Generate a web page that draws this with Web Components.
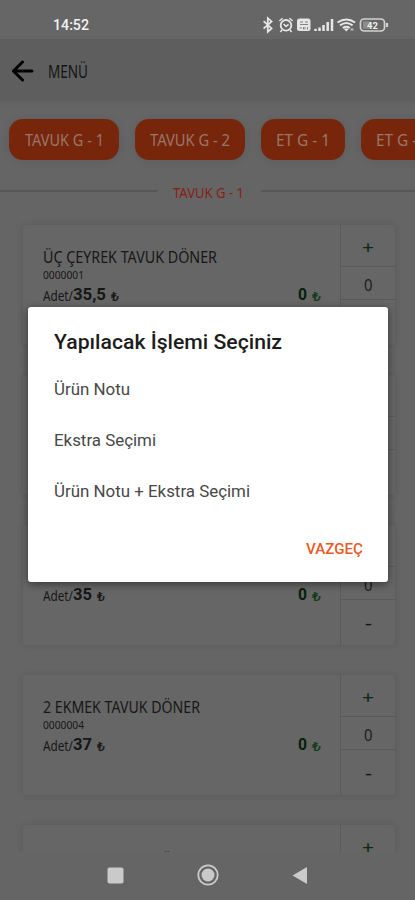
<!DOCTYPE html>
<html lang="tr">
<head>
<meta charset="utf-8">
<meta name="viewport" content="width=device-width">
<title>Menü</title>
<style>html,body{margin:0;background:#656565}body{width:415px;height:900px;overflow:hidden}</style>
</head>
<body>
<menu-screen></menu-screen>
<script>
const define = (name, html, setup) => customElements.define(name, class extends HTMLElement {
  connectedCallback() {
    if (this.shadowRoot) return;
    this.attachShadow({mode: 'open'}).innerHTML = html;
    if (setup) setup(this, this.shadowRoot);
  }
});

// A single line of text, condensed or widened to the width in its "w" attribute.
define('fit-text', `<style>
:host{display:block;white-space:nowrap;font-family:"Noto Sans","Open Sans",sans-serif;line-height:1;flex:none}
span{display:inline-block;transform-origin:0 50%;vertical-align:top}
</style><span><slot></slot></span>`, (el, root) => {
  const w = +el.getAttribute('w'), s = root.querySelector('span');
  el.style.width = w + 'px';
  s.style.transform = `scaleX(${w / s.getBoundingClientRect().width})`;
});

define('status-bar', `<style>
:host{display:flex;align-items:center;height:39px;box-sizing:border-box;padding:11px 26px 0 53px;color:#f2f2f2;background:#666}
fit-text{font:500 14.5px/1 Roboto,sans-serif;margin:2px auto 0 0}
svg{display:block;flex:none}
</style>
<fit-text w="36">14:52</fit-text>
<svg width="127" height="18" viewBox="0 0 127 18" fill="none" stroke="#e6e6e6" stroke-width="1.5">
<path d="M1.6 5.2 9.6 12.4 5.8 15.8V2.1L9.6 5.4 1.6 12.6" stroke-width="1.8"/>
<circle cx="24" cy="9.3" r="5.3" stroke-width="1.8"/><path d="m17.4 5 3.2-2.8M30.6 5l-3.2-2.8M20 14l-1.6 2M28 14l1.6 2M21.6 8l2.4 2.4 2.6-2"/>
<rect x="35" y="2.5" width="13.5" height="12.500" rx="2.5" fill="#e6e6e6" stroke="none"/>
<path d="M38 6h3m2 0h3M38 8.500h8M37.500 12h2.500m1.500-1v2.500m1.500-2.500v2.500m2.500-2.500v2.500" stroke="#858585" stroke-width="1"/>
<path d="M53.500 12.800v2.200M57.500 11.500v3.500M61.500 9v6M65.700 6v9M70 3v12" stroke-width="2.500"/>
<path d="M75.500 6.500q8.800-6.200 17.600 0M78 9.400q6.300-4.600 12.600 0M80.800 12q3.500-2.500 7 0" stroke-width="2"/>
<path d="m81.500 12.500 2.800 3 2.800-3z" fill="#e6e6e6" stroke="none"/><path d="M88.500 13.500h3" stroke="#bbb" stroke-width="2"/>
<rect x="98.500" y="3" width="24" height="12" rx="3.600" stroke="#d2d2d2" stroke-width="1.700"/><path d="M125 7v4" stroke="#d2d2d2" stroke-width="2.200"/>
<rect x="101" y="5.300" width="7" height="7.500" fill="#8c8c8c" stroke="none"/>
<text x="105" y="12.500" font-family="Roboto,sans-serif" font-weight="700" font-size="9.500" fill="#eee" stroke="none">42</text>
</svg>`);

define('app-header', `<style>
:host{display:flex;align-items:center;height:62px;padding:2px 0 0 11px;box-sizing:border-box;background:#5e5e5e;color:#141414;box-shadow:0 2px 7px #0000000d}
svg{margin-right:14px}fit-text{font-size:18px;margin-top:-1px}
</style>
<svg width="23" height="22" viewBox="0 0 23 22" fill="none" stroke="#000" stroke-width="3" stroke-linecap="round" stroke-linejoin="round"><path d="M21 11H2.500M11.500 2 2.500 11l9 9"/></svg>
<fit-text w="40"><slot></slot></fit-text>`);

define('category-chip', `<style>
:host{display:flex;flex:none;align-items:center;justify-content:center;height:41px;border-radius:14px;background:#78260b;color:#98776a;box-shadow:0 1px 9px #00000018}
fit-text{font-size:17px}
</style><fit-text><slot></slot></fit-text>`, (el, root) => {
  el.style.width = el.getAttribute('width') + 'px';
  const old = root.querySelector('fit-text'), n = document.createElement('fit-text');
  n.setAttribute('w', el.getAttribute('text-width'));
  n.textContent = el.textContent;
  old.replaceWith(n);
});

define('section-title', `<style>
:host{display:flex;align-items:center;height:20px;color:#861f12}
i{height:1.500px;background:#585858;flex:1}
fit-text{font-size:14px;margin:3px 17px 0 15px}
</style><i></i><fit-text w="71"><slot></slot></fit-text><i style="flex:0 0 154px"></i>`);

define('quantity-stepper', `<style>
:host{display:grid;grid-template-rows:41px 34px 45px;width:54px;border-left:1px solid #5a5a5a;color:#1c1c1c}
div{display:flex;align-items:center;justify-content:center}
.q{border:solid #5a5a5a;border-width:1px 0}
.q fit-text{margin-top:3px}
fit-text{font-size:16px}.plus{color:#0d2716}.minus{color:#270b0b}
</style>
<div class="plus"><fit-text w="12" style="font-size:18px;margin-top:3px">+</fit-text></div>
<div class="q"><fit-text w="8.500">0</fit-text></div>
<div class="minus"><fit-text w="7" style="font-size:18px">-</fit-text></div>`);

define('product-card', `<style>
:host{display:flex;height:120px;background:#666;border-radius:3px;box-shadow:0 0 7px #0000001f;color:#171717}
.info{flex:1;min-width:0;padding:24px 19px 0 19.500px}
.name{font-size:16.500px}
.code{font-size:11.500px;margin-top:3px}
.row{display:flex;align-items:center;height:20px;margin-top:5px}
.b{font:700 16px/1 Roboto,sans-serif}
.lira{font:400 12px/1 Roboto,"DejaVu Sans",sans-serif;-webkit-text-stroke:.2px;margin:3px 0 0 5px}
.total{margin-left:auto;color:#06200a}
</style>
<div class="info"></div>
<quantity-stepper></quantity-stepper>`, (el, root) => {
  const a = n => el.getAttribute(n), info = root.querySelector('.info');
  let html = '';
  if (a('name')) html += `<fit-text class="name" w="${a('name-width')}" style="margin-left:${a('name-indent') || 0}px">${a('name')}</fit-text>`;
  if (a('code')) html += `<fit-text class="code" w="41">${a('code')}</fit-text>`;
  if (a('price')) html += `<div class="row" ${a('code') ? '' : 'style="margin-top:36px"'}><fit-text w="30" style="font-size:14.500px">Adet/</fit-text><fit-text class="b price" w="${a('price-width')}">${a('price')}</fit-text><fit-text class="lira" w="8">₺</fit-text><fit-text class="b total" w="9">0</fit-text><fit-text class="lira" w="9" style="color:#123a1b">₺</fit-text></div>`;
  info.innerHTML = html;
});

define('choice-dialog', `<style>
:host{display:flex;flex-direction:column;position:absolute;left:28px;top:307px;width:360px;height:275px;box-sizing:border-box;padding:25px 25px 0 25.500px;background:#fff;border-radius:3px;box-shadow:0 2px 9px #0007}
h2{margin:0 0 30px;height:20px}
.t{font:500 20px/1 Roboto,sans-serif;color:#1c1c1c}
::slotted(*){height:51px}
button{all:unset;align-self:flex-end;margin-top:7px}
.c{font:500 15px/1 Roboto,sans-serif;color:#e85a26}
</style><h2><fit-text class="t" w="228">Yapılacak İşlemi Seçiniz</fit-text></h2>
<div class="list"><slot></slot></div><button><fit-text class="c" w="57">VAZGEÇ</fit-text></button>`);

define('nav-bar', `<style>
:host{display:flex;align-items:center;justify-content:space-between;height:48px;box-sizing:border-box;padding:0 107px 2px;background:#656565}
</style>
<svg width="17" height="17"><rect x=".5" y=".5" width="16" height="16" rx="2" fill="#cacaca"/></svg>
<svg width="22" height="22" viewBox="0 0 22 22"><circle cx="11" cy="11" r="9.700" fill="none" stroke="#cacaca" stroke-width="1.800"/><circle cx="11" cy="11" r="6.500" fill="#cacaca"/></svg>
<svg width="16" height="19"><path d="M.5 9.500 15 1v17z" fill="#cacaca"/></svg>`);

define('menu-screen', `<style>
:host{display:flex;flex-direction:column;position:relative;width:415px;height:900px;overflow:hidden;background:#656565}
.chips{display:flex;gap:16px;padding:18px 0 0 9px;height:63px;box-sizing:border-box;flex:none}
section-title{margin-top:17px;flex:none}
main{display:flex;flex-direction:column;gap:30px;padding:24px 20px 0 23px;flex:1;min-height:0;overflow:hidden}
product-card{flex:none}
status-bar,app-header,nav-bar{flex:none}
choice-dialog fit-text{font:400 16px/1 Roboto,sans-serif;color:#484848}
</style>
<status-bar></status-bar><app-header>MENÜ</app-header>
<div class="chips">
<category-chip width="110" text-width="79">TAVUK G - 1</category-chip>
<category-chip width="110" text-width="80">TAVUK G - 2</category-chip>
<category-chip width="84" text-width="54">ET G - 1</category-chip>
<category-chip width="84" text-width="54">ET G - 2</category-chip>
</div>
<section-title>TAVUK G - 1</section-title>
<main>
<product-card name="ÜÇ ÇEYREK TAVUK DÖNER" name-width="174" code="0000001" price="35,5" price-width="33"></product-card>
<product-card></product-card>
<product-card price="35" price-width="19"></product-card>
<product-card name="2 EKMEK TAVUK DÖNER" name-width="157" code="0000004" price="37" price-width="19"></product-card>
<product-card name="¨" name-width="8" name-indent="120"></product-card>
</main>
<nav-bar></nav-bar>
<choice-dialog><fit-text w="76">Ürün Notu</fit-text><fit-text w="102">Ekstra Seçimi</fit-text><fit-text w="196">Ürün Notu + Ekstra Seçimi</fit-text></choice-dialog>`);
</script>
</body>
</html>
